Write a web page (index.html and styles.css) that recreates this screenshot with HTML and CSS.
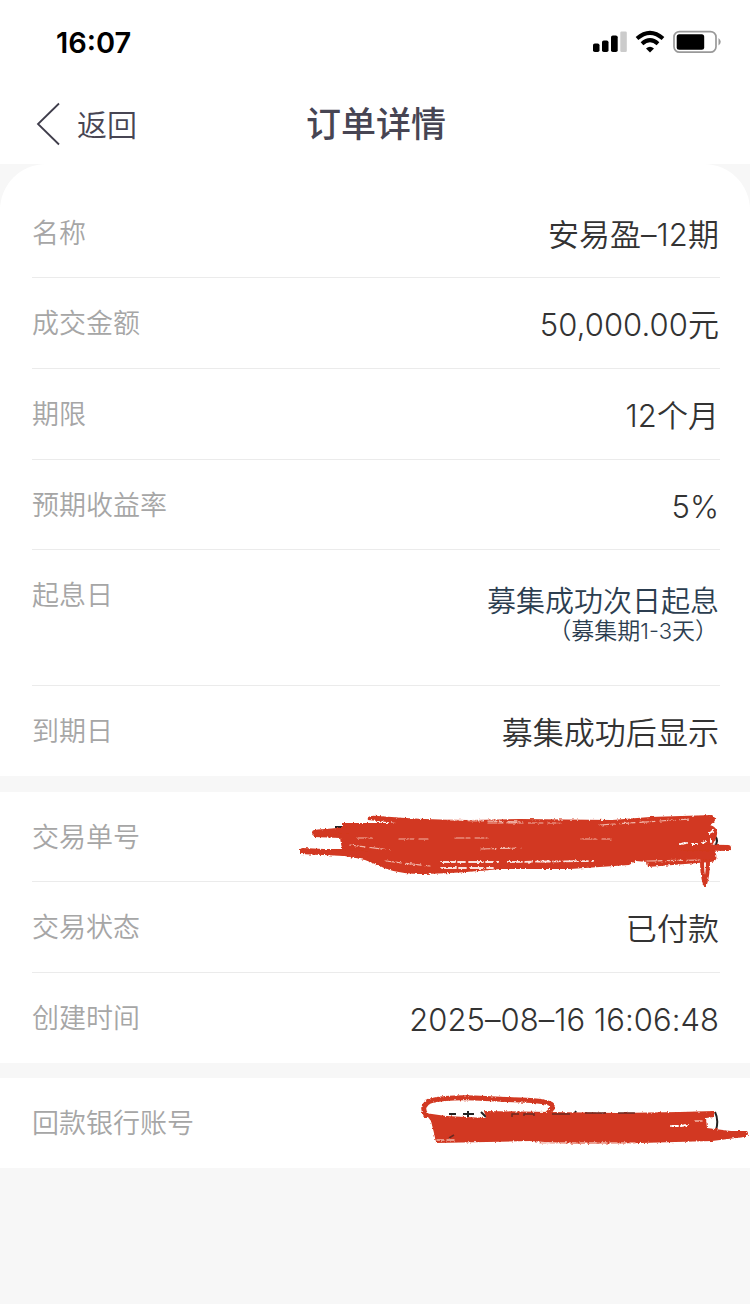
FILE: index.html
```html
<!DOCTYPE html>
<html lang="zh-CN">
<head>
    <meta charset="UTF-8">
    <meta name="viewport" content="width=device-width, initial-scale=1.0">
    <title>订单详情</title>
    <link rel="stylesheet" href="styles.css">
</head>
<body>
  <div class="status">
    <span class="time">16:07</span>
    <svg class="status-icons" width="130" height="24" viewBox="0 0 130 24">
      <rect x="0" y="13.5" width="6.5" height="8.5" rx="1.8"/>
      <rect x="9" y="10.5" width="6.5" height="11.5" rx="1.8"/>
      <rect x="18" y="5.5" width="6.7" height="16.5" rx="1.8"/>
      <rect x="27.3" y="1.5" width="6.5" height="20.5" rx="1.2" fill="#cbcbcb"/>
      <g fill="none" stroke="#000" stroke-width="4">
        <path d="M44 8.6 Q57 -2.8 70 8.6"/>
        <path d="M49 13.8 Q57 6.6 65 13.8"/>
      </g>
      <path d="M53 18.4 Q57 15.2 61 18.4 L57 22.4 Z"/>
      <rect x="81" y="1.6" width="42" height="20.6" rx="5.5" fill="none" stroke="#999" stroke-width="1.7"/>
      <rect x="83.7" y="4.3" width="27.5" height="15.4" rx="2.5"/>
      <path d="M125.5 8 Q130 11.8 125.5 15.5 Z" fill="#999"/>
    </svg>
  </div>

  <div class="header">
    <a class="back">
      <svg width="24" height="44" viewBox="0 0 24 44"><path d="M23 1.5 L2 22 L23 42.5" fill="none" stroke="#3f3d4b" stroke-width="1.8"/></svg>
      <span>返回</span>
    </a>
    <h1>订单详情</h1>
  </div>

  <div class="page">
    <div class="card first">
      <div class="row"><span class="label">名称</span><span class="value">安易盈–12期</span></div>
      <div class="row"><span class="label">成交金额</span><span class="value">50,000.00元</span></div>
      <div class="row"><span class="label">期限</span><span class="value">12个月</span></div>
      <div class="row"><span class="label">预期收益率</span><span class="value">5%</span></div>
      <div class="row tall">
        <span class="label">起息日</span>
        <div class="start">
          <p class="start-text">募集成功次日起息</p>
          <p class="start-note">（募集期<span class="num">1-3</span>天）</p>
        </div>
      </div>
      <div class="row"><span class="label">到期日</span><span class="value">募集成功后显示</span></div>
    </div>

    <div class="card">
      <div class="row">
        <span class="label">交易单号</span>
        <svg class="scribble order-no" width="450" height="100" viewBox="290 800 450 100">
          <defs>
            <filter id="rough" x="-5%" y="-20%" width="110%" height="140%">
              <feTurbulence type="fractalNoise" baseFrequency="0.45" numOctaves="2" seed="4"/>
              <feDisplacementMap in="SourceGraphic" scale="3" xChannelSelector="R" yChannelSelector="G"/>
            </filter>
          </defs>
          <g fill="none" stroke="#222" stroke-width="2">
            <path d="M335 827 H342 M344 839 V846 M714 835 Q720 841 714 847"/>
          </g>
          <g filter="url(#rough)" fill="none" stroke="#d23820" stroke-linecap="round" stroke-linejoin="round">
            <path fill="#d23820" stroke="none" d="M342 823 L396 823 L368 820 Q366 815 378 816 Q425 820 470 820 L520 819 L612 820 L650 817 L712 815 Q717 818 714 822 L710 825 Q720 828 716 838 L712 846 Q722 862 710 862 L648 867 L647 862 L636 861 L629 865 L570 869 L500 869 Q465 873 425 874 Q395 874 380 866 L365 860 L340 855 L300 854 L300 849 L342 849 L340 838 L314 837 L314 830 L342 829 Z"/>
            <path stroke-width="6" d="M315 833 L348 830 M303 851 L365 854 M680 847 L728 848"/>
            <path stroke-width="4" d="M702 861 Q702 875 705 884 Q708 875 708 861"/>
            <g stroke="#f2b6aa" stroke-width="1.2" stroke-dasharray="9 2 4 5">
              <path d="M386 861 Q410 864 430 866 M481 849 L521 848"/>
              <path d="M350 845 L390 850 M358 838 H372 M399 839 H428 M455 838 H487 M582 839 H610"/>
              <path d="M448 820 L520 822 M488 823 H560 M600 825 L690 819 M647 861 L700 860"/>
            </g>
            <g stroke="#fae3df" stroke-width="1.8" stroke-dasharray="14 3 7 4">
              <path d="M441 862 H498 M508 862 L593 861 M442 868 H493"/>
            </g>
            <path stroke="#fff" stroke-width="2" d="M680 844 L686 843 M692 844 H697 M703 843 L706 841 M709 833 L713 831 M711 839 V842"/>
          </g>
        </svg>
      </div>
      <div class="row"><span class="label">交易状态</span><span class="value">已付款</span></div>
      <div class="row"><span class="label">创建时间</span><span class="value">2025–08–16 16:06:48</span></div>
    </div>

    <div class="card last">
      <div class="row">
        <span class="label">回款银行账号</span>
        <svg class="scribble bank-no" width="340" height="80" viewBox="410 1080 340 80">
          <g fill="none" stroke="#222" stroke-width="2">
            <path d="M449 1113 H456 M463 1113 H474 M468 1110 V1116 M481 1111 L486 1116 M576 1110 L572 1118 M715 1111 Q719 1119 716 1129"/>
          </g>
          <g filter="url(#rough)" fill="none" stroke="#d23820" stroke-linecap="round" stroke-linejoin="round">
            <path stroke-width="5" d="M426 1114 Q420 1105 430 1100 Q446 1096 475 1097 L520 1099 Q549 1100 552 1104 Q553 1108 548 1112"/>
            <path fill="#d23820" stroke="none" d="M425 1112 L446 1115 L486 1117 L484 1110 L550 1111 L618 1112 L680 1111 L714 1110 L714 1116 L706 1117 L707 1127 L731 1130 L747 1130 Q750 1134 744 1136 L712 1140 L640 1142 L575 1143 L530 1140 L436 1142 L434 1132 L431 1120 Z"/>
            <path stroke="#f2b6aa" stroke-width="1.5" stroke-dasharray="7 3" d="M437 1139 H456 M540 1142 L635 1142 M695 1120 H703"/>
            <path stroke="#fff" stroke-width="2" d="M672 1125 H678 M681 1125 L687 1124"/>
          </g>
          <g fill="none" stroke="#6b2a22" stroke-width="1.5">
            <path d="M512 1116 V1113 H519 M524 1115 V1113 H534 V1115 M552 1113 H570 M585 1112 H606 M618 1112 H635 M449 1137 L454 1134"/>
          </g>
        </svg>
      </div>
    </div>
  </div>
</body>
</html>
```
FILE: styles.css
```css
*{
  margin: 0;
  padding: 0;
  box-sizing: border-box;
}

body{
  background-color: #f7f7f7;
  font-family: Inter, "Noto Sans CJK SC", sans-serif;
  font-weight: 350;
}

.status{
  display: flex;
  justify-content: space-between;
  align-items: center;
  height: 84px;
  padding: 0 27px 0 56px;
  background-color: #fff;
}

.time{
  font-size: 29px;
  font-weight: 600;
  color: #000;
}

.header{
  display: grid;
  grid-template-columns: 1fr auto 1fr;
  align-items: center;
  height: 80px;
  padding: 0 34px;
  background-color: #fff;
  color: #474553;
}

.back{
  display: flex;
  align-items: center;
  gap: 17px;
  padding-left: 2px;
  font-size: 30px;
}

.back span{
  padding-bottom: 2px;
}

h1{
  padding: 0 0 6px 2px;
  font-size: 35px;
  font-weight: 500;
}

.page{
  display: flex;
  flex-direction: column;
  gap: 16px;
}

.card{
  padding: 0 30px 0 32px;
  background-color: #fff;
}

.first{
  padding-top: 23.6px;
  border-radius: 46px 46px 0 0;
}

.last{
  margin-top: -1px;
}

.row{
  display: flex;
  justify-content: space-between;
  height: 90.7px;
  border-bottom: 1px solid #ebebeb;
}

.row:last-child{
  height: 89.8px;
  border-bottom: none;
}

.label{
  padding-top: 1px;
  font-size: 27px;
  line-height: 90px;
  color: #a6a6a6;
}

.value{
  padding: 2px 1px 0 0;
  font-size: 31px;
  line-height: 90px;
  letter-spacing: 0.05px;
  color: #333;
}

.tall{
  height: 135.5px;
}

.start{
  padding: 35px 1px 0 0;
  text-align: right;
  color: #2c3e50;
}

.start-text{
  font-size: 29px;
  line-height: 33px;
}

.start-note{
  padding-right: 1px;
  font-size: 23px;
  line-height: 26px;
}

.num{
  font-family: Inter, sans-serif;
  font-size: 22px;
}

/* pen strokes drawn over the hidden numbers */
.scribble{
  flex: none;
  overflow: visible;
}

.order-no{
  margin: 8px -20px 0 0;
}

.bank-no{
  margin: 3px -30px 0 0;
}
```
